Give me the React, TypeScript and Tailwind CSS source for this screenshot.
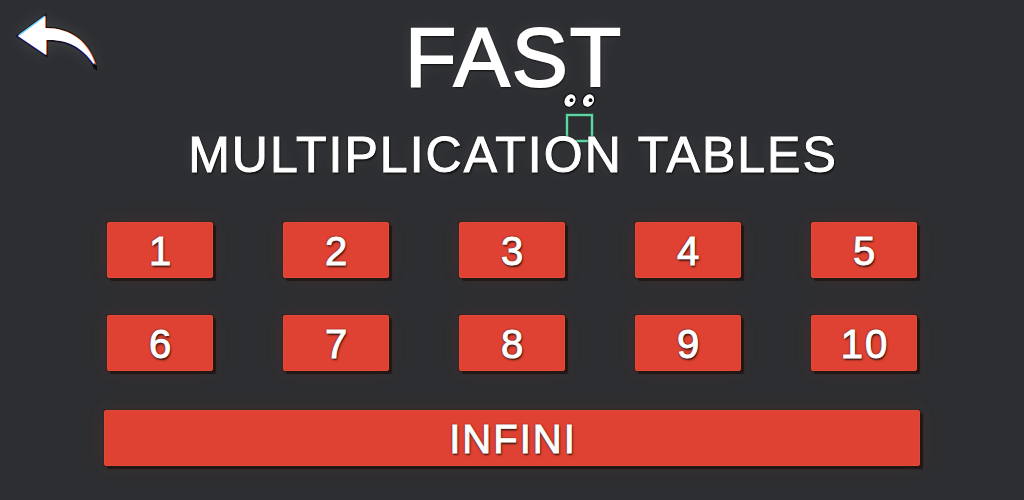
const tables = [1, 2, 3, 4, 5, 6, 7, 8, 9, 10];

const titleText =
  "tracking-[2px] text-white [text-shadow:0_0_2px_#0a0a0a,0_0_2px_#0a0a0a,1px_2px_2px_#111,0_0_16px_#ffffff1a]";

const tileStyle =
  "flex h-14 w-full cursor-pointer items-center justify-center rounded-xs border border-[#e04b38] bg-[#df4132] pt-px pl-0.5 text-[40px] leading-none tracking-[2px] text-white [-webkit-text-stroke:1px_#fff] shadow-[3px_3px_1px_#211816,0_0_2px_#2a1311,0_0_18px_#df41321f] [text-shadow:0_0_2px_#401510,0_0_2px_#401510,1px_2px_2px_#3a1712] hover:bg-[#e8503f]";

function BackArrow() {
  const shape = "M18 36 L45 16 V28 C70 28 89 41 96 67 C84 49 70 39 46 40 V55 Z";
  return (
    <svg viewBox="12 10 90 66" className="h-[66px] w-[90px] overflow-visible drop-shadow-[0_0_8px_#ffffff1a]" aria-hidden="true">
      <path d={shape} fill="#151515" stroke="#111" strokeWidth="3" />
      <path d="M88 52 L95 60 L97 71 L93 67 Z" fill="#09090b" />
      <path d={shape} fill="#2b3cff" transform="translate(-1 0)" />
      <path d={shape} fill="#ff6a2a" transform="translate(1 0)" />
      <path d={shape} fill="#fff" />
      <path d="M19 35 L45 16" stroke="#65cfff" strokeWidth="1.5" />
      <path d="M94 63 L97 66 L97 71 L93 67 Z" fill="#0b0b0d" />
    </svg>
  );
}

function Mascot() {
  return (
    <svg viewBox="562 92 36 52" className="h-[52px] w-9" aria-hidden="true">
      <rect x="567" y="115" width="25" height="26" fill="none" stroke="#287858" strokeWidth="3" />
      <rect x="567" y="115" width="25" height="26" fill="none" stroke="#62d3a3" strokeWidth="2" />
      <g fill="#fff" stroke="#0b0b0b" strokeWidth="1.2">
        <ellipse cx="570" cy="100.5" rx="5.8" ry="7.2" transform="rotate(32 570 100.5)" />
        <ellipse cx="588.5" cy="100.5" rx="5.8" ry="7.2" transform="rotate(32 588.5 100.5)" />
      </g>
      <circle cx="571.5" cy="100.2" r="1.9" fill="#090909" />
      <circle cx="590.5" cy="100.2" r="1.9" fill="#090909" />
    </svg>
  );
}

export default function App() {
  return (
    <main className="relative min-h-screen bg-[#2d2e31] px-[104px] pt-[15px] pb-8 font-['Liberation_Sans',Arial,sans-serif]">
      <button type="button" aria-label="Back" className="absolute top-[10px] left-3 cursor-pointer">
        <BackArrow />
      </button>

      <header className="flex flex-col items-center text-center">
        <h1 className={`pl-1 text-[84px] leading-[84px] [-webkit-text-stroke:2px_#fff] ${titleText}`}>FAST</h1>
        <div className="relative mt-[26px]">
          <div className="absolute -top-[33px] left-1/2 ml-[50px]">
            <Mascot />
          </div>
          <h2 className={`relative pl-0.5 text-[50px] leading-[60px] whitespace-nowrap [-webkit-text-stroke:1px_#fff] ${titleText}`}>
            MULTIPLICATION TABLES
          </h2>
        </div>
      </header>

      <nav aria-label="Multiplication tables" className="mt-[37px]">
        <div className="grid grid-cols-5 gap-x-[70px] gap-y-[37px] px-[3px]">
          {tables.map((n) => (
            <button key={n} type="button" className={tileStyle}>
              {n}
            </button>
          ))}
        </div>
        <div className="mt-[39px]">
          <button type="button" className={tileStyle}>
            INFINI
          </button>
        </div>
      </nav>
    </main>
  );
}
